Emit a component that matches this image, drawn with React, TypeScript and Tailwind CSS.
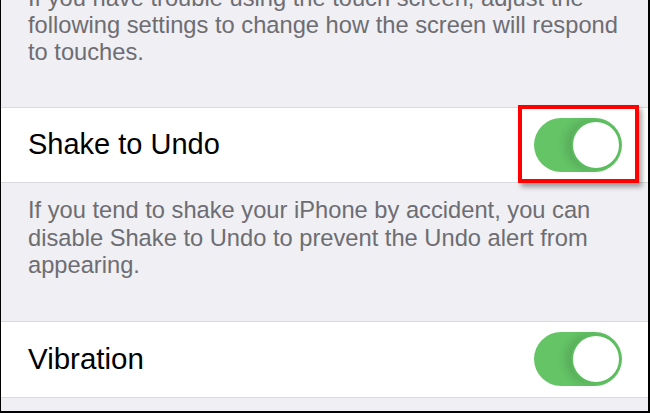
import React from "react";

function Toggle() {
  return (
    <div className="relative w-[88px] h-[54px] rounded-full bg-[#64c466]">
      <div className="absolute right-[1px] top-[2px] w-[50px] h-[50px] rounded-full bg-white border-[2px] border-[#5cbd5e] shadow-[-6px_0_8px_rgba(0,0,0,0.12)]" />
    </div>
  );
}

export default function App() {
  const font = { fontFamily: '"Liberation Sans", Arial, sans-serif' };
  return (
    <div
      className="relative w-[650px] h-[413px] overflow-hidden bg-[#efeff4] border-l border-r-2 border-b-2 border-black"
      style={font}
    >
      <div className="-mt-[15px] pl-[27px] text-[23.7px] leading-[27px] text-[#6d6d72]">
        <div className="whitespace-nowrap">If you have trouble using the touch screen, adjust the</div>
        <div className="whitespace-nowrap">following settings to change how the screen will respond</div>
        <div className="whitespace-nowrap">to touches.</div>
      </div>
      <div className="mt-[41px] h-[76px] bg-white border-y border-[#d9d9de] flex items-center justify-between pl-[27px] pr-[26px]">
        <span className="text-[29px] text-black">Shake to Undo</span>
        <Toggle />
      </div>
      <div className="mt-[14px] pl-[27px] text-[23.7px] leading-[27.5px] text-[#6d6d72]">
        <div className="whitespace-nowrap">If you tend to shake your iPhone by accident, you can</div>
        <div className="whitespace-nowrap">disable Shake to Undo to prevent the Undo alert from</div>
        <div className="whitespace-nowrap">appearing.</div>
      </div>
      <div className="mt-[41px] h-[77px] bg-white border-y border-[#d9d9de] flex items-center justify-between pl-[27px] pr-[26px]">
        <span className="text-[29.5px] text-black">Vibration</span>
        <Toggle />
      </div>
      <div className="absolute left-[517px] top-[105px] w-[121px] h-[78px] border-[4px] border-[#ff0000] shadow-[3px_4px_5px_rgba(0,0,0,0.35)]" />
    </div>
  );
}
